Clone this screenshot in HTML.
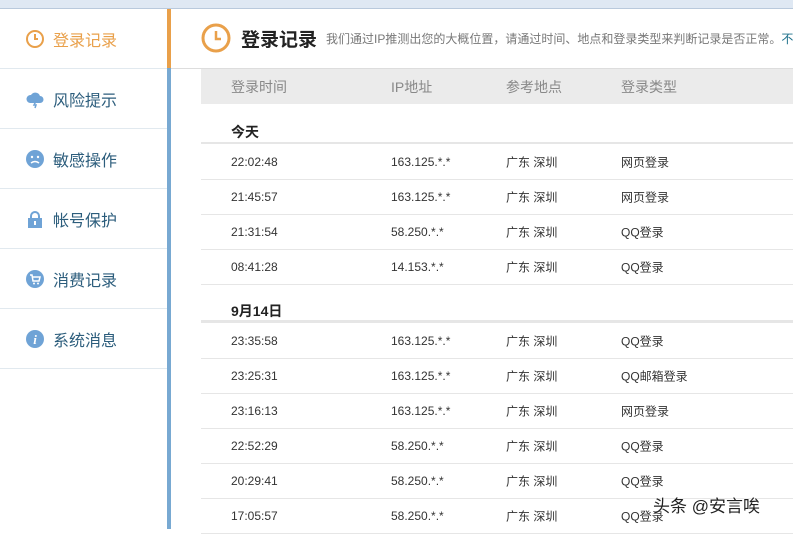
<!DOCTYPE html><html><head><meta charset="utf-8"><style>
body{margin:0;width:793px;height:529px;overflow:hidden;background:#fff;font-family:"Liberation Sans","Noto Sans CJK SC",sans-serif;position:relative}
.top{position:absolute;left:0;top:0;width:793px;height:8px;background:#dfe8f3;border-bottom:1px solid #b9c9dc}
.side{position:absolute;left:0;top:9px;width:167px}
.it{height:59px;border-bottom:1px solid #e1e9ef;display:flex;align-items:center;padding-left:25px;font-size:16px;color:#2c5d7c}
.it svg{margin-right:8px}
.bar1{position:absolute;left:167px;top:9px;width:4px;height:59px;background:#e9a04a}
.bar2{position:absolute;left:167px;top:68px;width:4px;height:461px;background:#78a9d2}
.h{position:absolute;left:201px;top:23px;width:900px;display:flex;align-items:center;white-space:nowrap}
.h svg{flex:none}
.h b{font-size:19px;color:#222;margin:0 9px 0 10px;flex:none}
.h span{font-size:12px;color:#777;white-space:nowrap}
.hl{position:absolute;left:171px;top:68px;width:622px;height:1px;background:#ddd}
.th{position:absolute;left:201px;top:69px;width:592px;height:35px;background:#ebebeb;font-size:14px;color:#888}
.c{position:absolute;white-space:nowrap}
.row{position:absolute;left:201px;width:592px;height:35px;border-bottom:1px solid #e6e6e6;font-size:12px;color:#333}
.row .c,.th .c{top:50%;transform:translateY(-50%)}
.d{position:absolute;left:231px;font-size:14px;font-weight:bold;color:#222}
</style></head><body>
<div class="top"></div>
<div class="side">
<div class="it" style="color:#e9a04a"><svg width="20" height="20"><circle cx="10" cy="10" r="8" fill="none" stroke="#e9a04a" stroke-width="2"/><path d="M10 5v5h3" stroke="#e9a04a" stroke-width="2" fill="none"/></svg>登录记录</div>
<div class="it"><svg width="20" height="20"><path d="M5 14a4 4 0 0 1 1-8 5 5 0 0 1 9 1 3.5 3.5 0 0 1 0 7z" fill="#6fa3d6"/><path d="M11 12l-2 4h2l-1 3" stroke="#6fa3d6" fill="none" stroke-width="1.5"/></svg>风险提示</div>
<div class="it"><svg width="20" height="20"><circle cx="10" cy="10" r="9" fill="#6fa3d6"/><circle cx="7" cy="8" r="1.2" fill="#fff"/><circle cx="13" cy="8" r="1.2" fill="#fff"/><path d="M6 14q4-3 8 0" stroke="#fff" fill="none" stroke-width="1.5"/></svg>敏感操作</div>
<div class="it"><svg width="20" height="20"><path d="M6 9V7a4 4 0 0 1 8 0v2" stroke="#6fa3d6" stroke-width="2" fill="none"/><rect x="3" y="9" width="14" height="10" fill="#6fa3d6"/><rect x="9" y="12" width="2" height="4" fill="#fff"/></svg>帐号保护</div>
<div class="it"><svg width="20" height="20"><circle cx="10" cy="10" r="9" fill="#6fa3d6"/><path d="M5 6h2l1 6h6l1-4H8" stroke="#fff" fill="none" stroke-width="1.5"/><circle cx="9" cy="14.5" r="1" fill="#fff"/><circle cx="13" cy="14.5" r="1" fill="#fff"/></svg>消费记录</div>
<div class="it"><svg width="20" height="20"><circle cx="10" cy="10" r="9" fill="#6fa3d6"/><text x="10" y="15" font-size="13" font-weight="bold" font-style="italic" fill="#fff" text-anchor="middle" font-family="Liberation Serif">i</text></svg>系统消息</div>
</div>
<div class="bar1"></div><div class="bar2"></div>
<div class="h"><svg width="30" height="30"><circle cx="15" cy="15" r="13" fill="none" stroke="#e9a04a" stroke-width="3"/><path d="M15 8v8h5" stroke="#e9a04a" stroke-width="2.5" fill="none"/></svg><b>登录记录</b><span>我们通过IP推测出您的大概位置，请通过时间、地点和登录类型来判断记录是否正常。<span style="color:#1b6f8a">不是</span></span></div>
<div class="hl"></div>
<div class="th"><span class="c" style="left:30px">登录时间</span><span class="c" style="left:190px">IP地址</span><span class="c" style="left:305px">参考地点</span><span class="c" style="left:420px">登录类型</span></div>
<div class="d" style="top:122px">今天</div>
<div class="row" style="border-bottom:2px solid #e6e6e6;height:0;top:142px"></div>
<div class="row" style="top:144px"><span class="c" style="left:30px">22:02:48</span><span class="c" style="left:190px">163.125.*.*</span><span class="c" style="left:305px">广东 深圳</span><span class="c" style="left:420px">网页登录</span></div>
<div class="row" style="top:179px"><span class="c" style="left:30px">21:45:57</span><span class="c" style="left:190px">163.125.*.*</span><span class="c" style="left:305px">广东 深圳</span><span class="c" style="left:420px">网页登录</span></div>
<div class="row" style="top:214px"><span class="c" style="left:30px">21:31:54</span><span class="c" style="left:190px">58.250.*.*</span><span class="c" style="left:305px">广东 深圳</span><span class="c" style="left:420px">QQ登录</span></div>
<div class="row" style="top:249px"><span class="c" style="left:30px">08:41:28</span><span class="c" style="left:190px">14.153.*.*</span><span class="c" style="left:305px">广东 深圳</span><span class="c" style="left:420px">QQ登录</span></div>
<div class="d" style="top:301px">9月14日</div>
<div class="row" style="height:0;top:320px;border-bottom:3px solid #e6e6e6"></div>
<div class="row" style="top:323px"><span class="c" style="left:30px">23:35:58</span><span class="c" style="left:190px">163.125.*.*</span><span class="c" style="left:305px">广东 深圳</span><span class="c" style="left:420px">QQ登录</span></div>
<div class="row" style="top:358px"><span class="c" style="left:30px">23:25:31</span><span class="c" style="left:190px">163.125.*.*</span><span class="c" style="left:305px">广东 深圳</span><span class="c" style="left:420px">QQ邮箱登录</span></div>
<div class="row" style="top:393px"><span class="c" style="left:30px">23:16:13</span><span class="c" style="left:190px">163.125.*.*</span><span class="c" style="left:305px">广东 深圳</span><span class="c" style="left:420px">网页登录</span></div>
<div class="row" style="top:428px"><span class="c" style="left:30px">22:52:29</span><span class="c" style="left:190px">58.250.*.*</span><span class="c" style="left:305px">广东 深圳</span><span class="c" style="left:420px">QQ登录</span></div>
<div class="row" style="top:463px"><span class="c" style="left:30px">20:29:41</span><span class="c" style="left:190px">58.250.*.*</span><span class="c" style="left:305px">广东 深圳</span><span class="c" style="left:420px">QQ登录</span></div>
<div class="row" style="top:498px"><span class="c" style="left:30px">17:05:57</span><span class="c" style="left:190px">58.250.*.*</span><span class="c" style="left:305px">广东 深圳</span><span class="c" style="left:420px">QQ登录</span></div>
<div style="position:absolute;left:653px;top:492px;font-size:17px;color:#222;text-shadow:0 0 2px #fff,0 0 2px #fff">头条 @安言唉</div>
</body></html>
